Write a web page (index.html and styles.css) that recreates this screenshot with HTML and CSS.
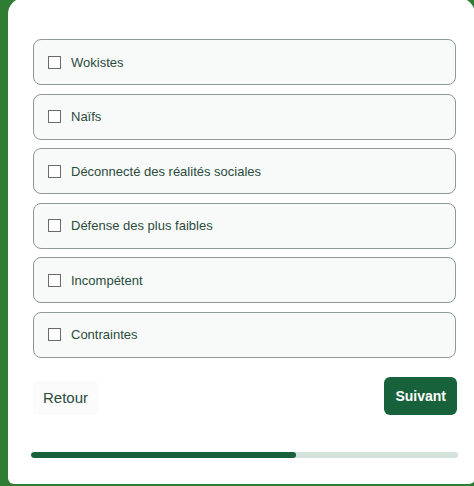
FILE: index.html
```html
<!DOCTYPE html>
<html lang="fr">
<head>
    <meta charset="UTF-8">
    <meta name="viewport" content="width=device-width, initial-scale=1.0">
    <title>Questionnaire</title>
    <link rel="stylesheet" href="styles.css">
</head>
<body>
    <div class="quiz_card">
        <div class="option_list">
            <label class="option_item"><span class="option_box"></span>Wokistes</label>
            <label class="option_item"><span class="option_box"></span>Naïfs</label>
            <label class="option_item"><span class="option_box"></span>Déconnecté des réalités sociales</label>
            <label class="option_item"><span class="option_box"></span>Défense des plus faibles</label>
            <label class="option_item"><span class="option_box"></span>Incompétent</label>
            <label class="option_item"><span class="option_box"></span>Contraintes</label>
        </div>

        <div class="quiz_nav">
            <button type="button" class="btn-back">Retour</button>
            <button type="button" class="btn-next">Suivant</button>
        </div>

        <div class="progress_track">
            <div class="progress_fill" style="width: 62%"></div>
        </div>
    </div>
</body>
</html>
```

FILE: styles.css
```css
* {
    box-sizing: border-box;
}

html, body {
    height: 100%;
}

body {
    margin: 0;
    padding-left: 8px;
    background-color: #2e7d32;
    font-family: "Liberation Sans", Arial, sans-serif;
    overflow: hidden;
}

.quiz_card {
    margin-top: -2px;
    width: 467px;
    height: 486px;
    padding: 41px 0 0 25px;
    background-color: #ffffff;
    border-radius: 16px 16px 6px 6px;
}

.option_list {
    display: flex;
    flex-direction: column;
    gap: 8.6px;
    width: 423px;
}

.option_item {
    display: flex;
    align-items: center;
    height: 46px;
    padding-left: 14px;
    border: 1px solid #8f9a94;
    border-radius: 8px;
    background-color: #f8fafa;
    color: #2b4b3c;
    font-size: 13px;
}

.option_box {
    width: 13px;
    height: 13px;
    margin-right: 10px;
    border: 1px solid #6b6b6b;
    background-color: #ffffff;
}

.quiz_nav {
    display: flex;
    justify-content: space-between;
    align-items: center;
    width: 424px;
    margin-top: 19px;
}

button {
    border: none;
    cursor: pointer;
    font-family: inherit;
}

.btn-back {
    height: 34px;
    padding: 0 10px;
    margin-top: 4px;
    background-color: #fbfbfb;
    border-radius: 4px;
    color: #2b4b3c;
    font-size: 15px;
}

.btn-next {
    height: 38px;
    padding: 0 11px;
    background-color: #17623a;
    border-radius: 6px;
    color: #ffffff;
    font-size: 14px;
    font-weight: bold;
}

.progress_track {
    width: 427px;
    height: 6px;
    margin: 37px 0 0 -2px;
    background-color: #d3e2da;
    border-radius: 3px;
    overflow: hidden;
}

.progress_fill {
    height: 100%;
    background-color: #17623a;
    border-radius: 3px;
}
```
